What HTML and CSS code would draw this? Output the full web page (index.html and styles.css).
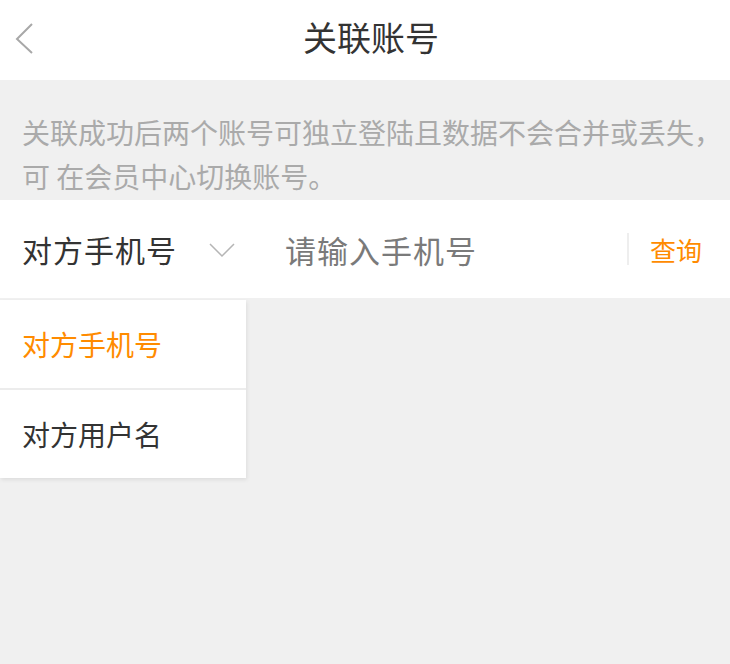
FILE: index.html
```html
<!DOCTYPE html>
<html lang="zh-CN">
<head>
    <meta charset="UTF-8">
    <meta name="viewport" content="width=device-width, initial-scale=1.0">
    <title>关联账号</title>
    <link rel="stylesheet" href="styles.css">
</head>
<body>

    <!-- Top bar -->
    <div class="header">
        <a class="back" href="#">
            <svg width="20" height="34" viewBox="0 0 20 34">
                <polyline points="17,2 2,17 17,31" fill="none" stroke="#a8a8a8" stroke-width="2"/>
            </svg>
        </a>
        <h1>关联账号</h1>
    </div>

    <p class="notice"><span class="line">关联成功后两个账号可独立登陆且数据不会合并或丢失，</span><br>可 在会员中心切换账号。</p>

    <!-- Search row -->
    <div class="search-row">
        <div class="picker">
            <span class="picker-label">对方手机号</span>
            <svg width="26" height="16" viewBox="0 0 26 16">
                <polyline points="1,2 13,14 25,2" fill="none" stroke="#b5b5b5" stroke-width="1.5"/>
            </svg>
        </div>
        <input type="text" class="search-input" placeholder="请输入手机号">
        <span class="divider"></span>
        <button class="search-btn">查询</button>
    </div>

    <!-- Picker menu -->
    <ul class="menu">
        <li class="active">对方手机号</li>
        <li>对方用户名</li>
    </ul>

</body>
</html>
```

FILE: styles.css
```css
body {
    margin: 0;
    min-height: 664px;
    background-color: #f0f0f0;
    font-family: "Noto Sans CJK SC", "Noto Sans", sans-serif;
    color: #333;
}

.header {
    position: relative;
    height: 80px;
    display: flex;
    align-items: center;
    justify-content: center;
    background-color: #fff;
}

.header h1 {
    margin: 0 0 8px 12px;
    font-size: 34px;
    font-weight: 400;
    color: #333;
}

.back {
    position: absolute;
    left: 15px;
    top: 22px;
    display: block;
    line-height: 0;
}

.notice {
    margin: 0;
    padding: 30px 0 0 22px;
    height: 90px;
    font-size: 28px;
    line-height: 44px;
    color: #aaa;
}

.notice .line {
    white-space: nowrap;
}

.search-row {
    display: flex;
    align-items: center;
    height: 98px;
    padding: 0 28px 0 22px;
    background-color: #fff;
}

.picker {
    display: flex;
    align-items: center;
}

.picker-label {
    font-size: 30px;
    letter-spacing: 1px;
    color: #333;
}

.picker svg {
    margin-left: 32px;
    margin-top: 2px;
}

.search-input {
    flex: 1;
    min-width: 0;
    margin-left: 50px;
    padding: 0;
    border: none;
    outline: none;
    font-family: inherit;
    font-size: 31px;
    letter-spacing: 1px;
    color: #333;
}

.search-input::placeholder {
    color: #7a7a7a;
}

.divider {
    width: 2px;
    height: 32px;
    background-color: #eee;
}

.search-btn {
    margin-left: 21px;
    padding: 0;
    border: none;
    background: none;
    font-family: inherit;
    font-size: 26px;
    color: #ff8b00;
}

.menu {
    position: absolute;
    top: 300px;
    left: 0;
    width: 246px;
    margin: 0;
    padding: 0;
    list-style: none;
    background-color: #fff;
    box-shadow: 1px 2px 4px rgba(0, 0, 0, 0.08);
}

.menu li {
    height: 88px;
    display: flex;
    align-items: center;
    padding-left: 22px;
    font-size: 28px;
    color: #333;
}

.menu li + li {
    border-top: 2px solid #ececec;
}

.menu li.active {
    color: #ff8b00;
}
```
